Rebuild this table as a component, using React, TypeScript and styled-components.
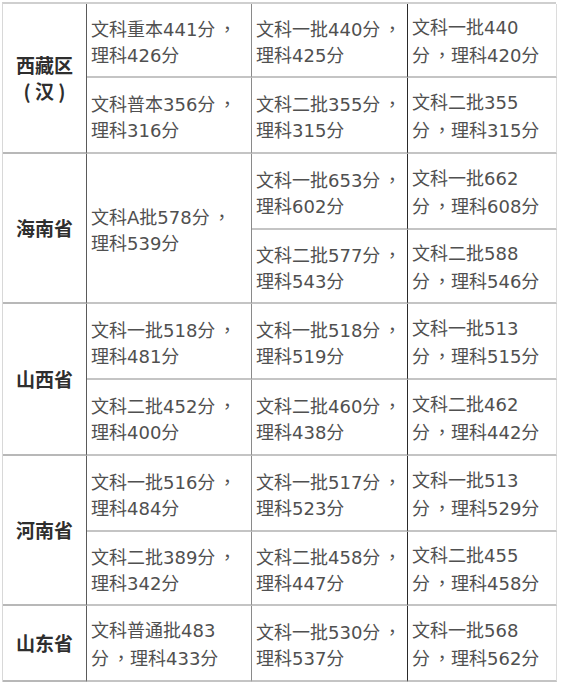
import React from 'react'
import styled, { createGlobalStyle } from 'styled-components'

const GlobalStyle = createGlobalStyle`
    html, body {
        margin: 0;
        padding: 0;
        background: #fff;
    }
    body {
        font-family: "Noto Sans CJK SC", "Noto Sans", sans-serif;
    }
`;

type Cell = { lines: string[]; span?: number; col?: number };
type Group = { name: string[]; heights: number[]; cells: Cell[] };

const groups: Group[] = [
    {
        name: ['西藏区', '( 汉 )'],
        heights: [74, 76],
        cells: [
            { lines: ['文科重本441分，', '理科426分'] },
            { lines: ['文科一批440分，', '理科425分'] },
            { lines: ['文科一批440', '分，理科420分'] },
            { lines: ['文科普本356分，', '理科316分'] },
            { lines: ['文科二批355分，', '理科315分'] },
            { lines: ['文科二批355', '分，理科315分'] },
        ],
    },
    {
        name: ['海南省'],
        heights: [76, 74],
        cells: [
            { lines: ['文科A批578分，', '理科539分'], span: 2, col: 2 },
            { lines: ['文科一批653分，', '理科602分'], col: 3 },
            { lines: ['文科一批662', '分，理科608分'], col: 4 },
            { lines: ['文科二批577分，', '理科543分'], col: 3 },
            { lines: ['文科二批588', '分，理科546分'], col: 4 },
        ],
    },
    {
        name: ['山西省'],
        heights: [76, 76],
        cells: [
            { lines: ['文科一批518分，', '理科481分'] },
            { lines: ['文科一批518分，', '理科519分'] },
            { lines: ['文科一批513', '分，理科515分'] },
            { lines: ['文科二批452分，', '理科400分'] },
            { lines: ['文科二批460分，', '理科438分'] },
            { lines: ['文科二批462', '分，理科442分'] },
        ],
    },
    {
        name: ['河南省'],
        heights: [76, 74],
        cells: [
            { lines: ['文科一批516分，', '理科484分'] },
            { lines: ['文科一批517分，', '理科523分'] },
            { lines: ['文科一批513', '分，理科529分'] },
            { lines: ['文科二批389分，', '理科342分'] },
            { lines: ['文科二批458分，', '理科447分'] },
            { lines: ['文科二批455', '分，理科458分'] },
        ],
    },
    {
        name: ['山东省'],
        heights: [76],
        cells: [
            { lines: ['文科普通批483', '分，理科433分'] },
            { lines: ['文科一批530分，', '理科537分'] },
            { lines: ['文科一批568', '分，理科562分'] },
        ],
    },
];

// border colour to the right of each column, as in the source image
const columnEdge: Record<number, string> = {
    1: '#5a5a5a',
    2: '#8a8a8a',
    3: '#2a2a2a',
    4: '#dcdcdc',
};

function Line({ text }: { text: string }) {
    const parts = text.split('，');
    return (
        <div>
            {parts.map((p, i) => (
                <React.Fragment key={i}>
                    {p}
                    {i < parts.length - 1 && <Comma>，</Comma>}
                </React.Fragment>
            ))}
        </div>
    )
}

function App() {
    const rows = groups.flatMap(g => g.heights).map(h => `${h}px`).join(' ');
    return (
        <Page>
            <GlobalStyle />
            <ScoreGrid $rows={rows}>
                {groups.map(g => (
                    <React.Fragment key={g.name.join('')}>
                        <ProvinceCell $span={g.heights.length} $edge={columnEdge[1]}>
                            {g.name.map(n => <div key={n}>{n}</div>)}
                        </ProvinceCell>
                        {g.cells.map((c, i) => (
                            <ScoreCell
                                key={i}
                                $span={c.span ?? 1}
                                $edge={columnEdge[c.col ?? 2 + (i % 3)]}
                            >
                                {c.lines.map(l => <Line key={l} text={l} />)}
                            </ScoreCell>
                        ))}
                    </React.Fragment>
                ))}
            </ScoreGrid>
        </Page>
    )
}

const Page = styled.div`
    padding: 2px 6px 0 2px;
    width: 562px;
    box-sizing: border-box;
`;

const ScoreGrid = styled.div<{ $rows: string }>`
    display: grid;
    grid-template-columns: 84px 165px 156px 149px;
    grid-template-rows: ${p => p.$rows};
    border-top: 2px solid #cfcfcf;
    border-left: 1px solid #d8d8d8;
`;

const BaseCell = styled.div<{ $span: number; $edge: string }>`
    box-sizing: border-box;
    grid-row: span ${p => p.$span};
    display: flex;
    flex-direction: column;
    justify-content: center;
    border-bottom: 2px solid #c4c4c4;
    border-right: 1px solid ${p => p.$edge};
    font-size: 18px;
    line-height: 26px;
    white-space: nowrap;
`;

const ProvinceCell = styled(BaseCell)`
    align-items: center;
    font-weight: bold;
    font-size: 19px;
    color: #2e2e2e;
    border-bottom-color: #b8b8b8;
`;

const ScoreCell = styled(BaseCell)`
    padding-left: 4px;
    padding-top: 3px;
    color: #505050;
    font-family: "DejaVu Sans", "Noto Sans CJK SC", sans-serif;
`;

const Comma = styled.span`
    font-family: "Noto Sans CJK TC", "Noto Sans CJK SC", sans-serif;
    padding-left: 3px;
`;

export default App
